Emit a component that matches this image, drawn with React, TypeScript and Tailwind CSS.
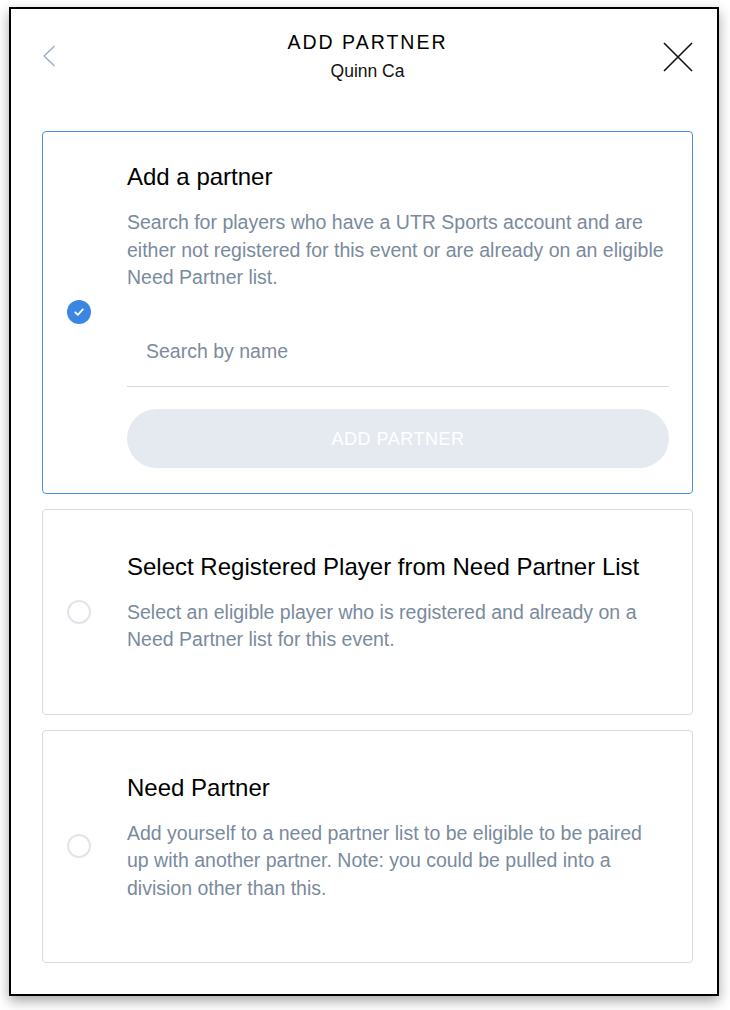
import React from 'react';

const font = { fontFamily: '"Liberation Sans", Arial, sans-serif' };

type Option = {
  title: string;
  desc: string;
  checked?: boolean;
};

const Radio = ({ checked }: { checked?: boolean }) =>
  checked ? (
    <div className="w-[24px] h-[24px] shrink-0 rounded-full bg-[#3b86e2] flex items-center justify-center">
      <svg width="12" height="12" viewBox="0 0 12 12" fill="none">
        <path d="M2.2 6.3 L4.8 8.8 L9.8 3.4" stroke="white" strokeWidth="1.8" strokeLinecap="round" strokeLinejoin="round" />
      </svg>
    </div>
  ) : (
    <div className="w-[24px] h-[24px] shrink-0 rounded-full border-2 border-[#e1e5ea] bg-white" />
  );

const Card = ({ option, children }: { option: Option; children?: React.ReactNode }) => (
  <div
    className={`flex items-center gap-[36px] pl-[24px] pr-[23px] rounded-[4px] border ${
      option.checked ? 'border-[#4a8fe3]' : 'border-[#d6dce2]'
    }`}
  >
    <Radio checked={option.checked} />
    {/* padding sits on the column so the radio centres on the whole card */}
    <div className={`flex-1 flex flex-col ${option.checked ? 'pt-[30px] pb-[25px]' : 'pt-[42px] pb-[60px]'}`}>
      <h2 className="text-[24px] leading-[30px] text-black">{option.title}</h2>
      <p className="mt-[17px] text-[19.5px] leading-[27.5px] text-[#7a8a9d]">{option.desc}</p>
      {children}
    </div>
  </div>
);

export default function App() {
  return (
    <div className="min-h-screen bg-white pt-[7px] pl-[9px]" style={font}>
      <div className="w-[710px] h-[989px] border-2 border-black bg-white shadow-[0_5px_12px_rgba(0,0,0,0.35)] flex flex-col">
        {/* Header */}
        <div className="h-[122px] grid grid-cols-[1fr_auto_1fr] items-start pt-[21px] pl-[31px] pr-[24px]">
          <button className="mt-[15px] w-[14px] h-[22px] justify-self-start">
            <svg width="14" height="22" viewBox="0 0 14 22" fill="none">
              <path d="M12.5 1 L2 11 L12.5 21" stroke="#94a6b9" strokeWidth="1.2" />
            </svg>
          </button>
          <div className="flex flex-col items-center">
            <h1 className="text-[19.5px] leading-[24px] tracking-[2px] text-black">ADD PARTNER</h1>
            <div className="mt-[6px] text-[17.5px] leading-[22px] text-[#111]">Quinn Ca</div>
          </div>
          <button className="justify-self-end mt-[12px] w-[30px] h-[30px]">
            <svg width="30" height="30" viewBox="0 0 30 30" fill="none">
              <path d="M1 1 L29 29 M29 1 L1 29" stroke="#111" strokeWidth="1.6" />
            </svg>
          </button>
        </div>

        {/* Options */}
        <div className="ml-[31px] w-[651px] flex flex-col gap-[15px]">
          <Card
            option={{
              title: 'Add a partner',
              desc: 'Search for players who have a UTR Sports account and are either not registered for this event or are already on an eligible Need Partner list.',
              checked: true,
            }}
          >
            <input
              placeholder="Search by name"
              className="mt-[25px] h-[70px] w-full border-b border-[#d3d8de] pl-[19px] text-[19.5px] outline-none placeholder:text-[#7d8b9c]"
              style={font}
            />
            <button className="mt-[22px] h-[59px] w-full rounded-full bg-[#e5eaf0] pt-[3px] text-white text-[18px] tracking-[0.5px]">
              ADD PARTNER
            </button>
          </Card>
          <Card
            option={{
              title: 'Select Registered Player from Need Partner List',
              desc: 'Select an eligible player who is registered and already on a Need Partner list for this event.',
            }}
          />
          <Card
            option={{
              title: 'Need Partner',
              desc: 'Add yourself to a need partner list to be eligible to be paired up with another partner. Note: you could be pulled into a division other than this.',
            }}
          />
        </div>
      </div>
    </div>
  );
}
